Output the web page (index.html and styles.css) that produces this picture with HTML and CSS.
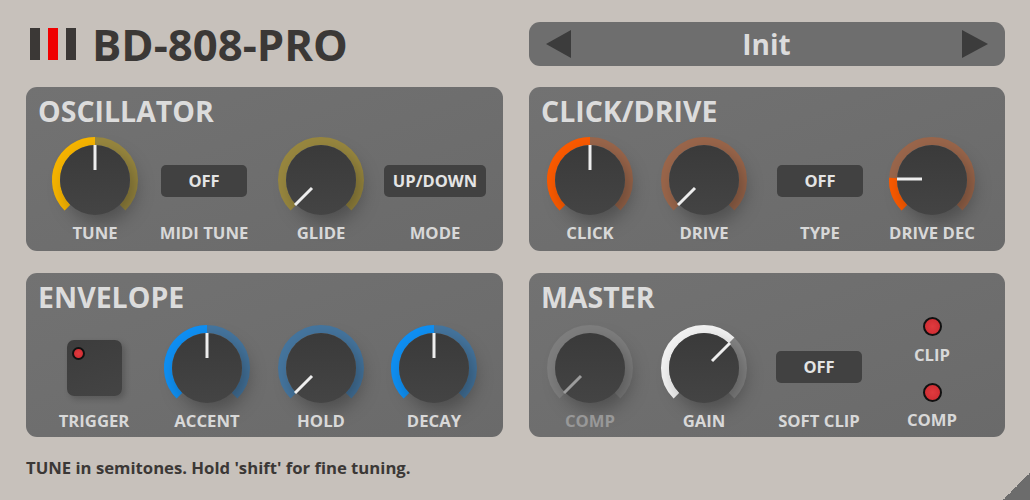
FILE: index.html
```html
<!DOCTYPE html>
<html lang="en">
<head>
    <meta charset="UTF-8">
    <title>BD-808-PRO</title>
    <link rel="stylesheet" href="styles.css">
</head>
<body>
    <div class="page">
        <div class="brand">
            <div class="logo"><span></span><span class="red"></span><span></span></div>
            <h1>BD-808-PRO</h1>
        </div>
        <div class="preset">
            <span class="arrow arrow-left"></span>
            <span class="preset-name">Init</span>
            <span class="arrow arrow-right"></span>
        </div>

        <section class="panel upper osc">
            <h2>OSCILLATOR</h2>
            <div class="row">
                <div class="unit">
                    <div class="control">
                        <svg class="knob yellow" viewBox="-45 -45 90 90">
                            <defs>
                                <linearGradient id="cap" x1="0" y1="0" x2="0" y2="1">
                                    <stop offset="0" stop-color="#3a3a3a"/>
                                    <stop offset="1" stop-color="#444444"/>
                                </linearGradient>
                            </defs>
                            <path class="track" d="M-27.58 27.58A39 39 0 1 1 27.58 27.58"/>
                            <path class="value" d="M-27.58 27.58A39 39 0 0 1 0 -39"/>
                            <circle class="cap" r="35"/>
                            <line class="mark" x1="0" y1="-10" x2="0" y2="-35"/>
                        </svg>
                    </div>
                    <div class="label">TUNE</div>
                </div>
                <div class="unit">
                    <div class="control"><div class="switch">OFF</div></div>
                    <div class="label">MIDI TUNE</div>
                </div>
                <div class="unit">
                    <div class="control">
                        <svg class="knob yellow" viewBox="-45 -45 90 90">
                            <path class="track" d="M-27.58 27.58A39 39 0 1 1 27.58 27.58"/>
                            <circle class="cap" r="35"/>
                            <line class="mark" x1="-9" y1="8" x2="-26" y2="25"/>
                        </svg>
                    </div>
                    <div class="label">GLIDE</div>
                </div>
                <div class="unit">
                    <div class="control"><div class="switch">UP/DOWN</div></div>
                    <div class="label">MODE</div>
                </div>
            </div>
        </section>

        <section class="panel upper click">
            <h2>CLICK/DRIVE</h2>
            <div class="row">
                <div class="unit">
                    <div class="control">
                        <svg class="knob orange" viewBox="-45 -45 90 90">
                            <path class="track" d="M-27.58 27.58A39 39 0 1 1 27.58 27.58"/>
                            <path class="value" d="M-27.58 27.58A39 39 0 0 1 0 -39"/>
                            <circle class="cap" r="35"/>
                            <line class="mark" x1="0" y1="-10" x2="0" y2="-35"/>
                        </svg>
                    </div>
                    <div class="label">CLICK</div>
                </div>
                <div class="unit">
                    <div class="control">
                        <svg class="knob orange" viewBox="-45 -45 90 90">
                            <path class="track" d="M-27.58 27.58A39 39 0 1 1 27.58 27.58"/>
                            <circle class="cap" r="35"/>
                            <line class="mark" x1="-9" y1="8" x2="-26" y2="25"/>
                        </svg>
                    </div>
                    <div class="label">DRIVE</div>
                </div>
                <div class="unit">
                    <div class="control"><div class="switch">OFF</div></div>
                    <div class="label">TYPE</div>
                </div>
                <div class="unit">
                    <div class="control">
                        <svg class="knob orange" viewBox="-45 -45 90 90">
                            <path class="track" d="M-27.58 27.58A39 39 0 1 1 27.58 27.58"/>
                            <path class="value" d="M-27.58 27.58A39 39 0 0 1 -39 -2"/>
                            <circle class="cap" r="35"/>
                            <line class="mark" x1="-35" y1="-1" x2="-10" y2="-1"/>
                        </svg>
                    </div>
                    <div class="label">DRIVE DEC</div>
                </div>
            </div>
        </section>

        <section class="panel lower env">
            <h2>ENVELOPE</h2>
            <div class="row">
                <div class="unit">
                    <div class="control">
                        <div class="trigger"><span class="led led-small"></span></div>
                    </div>
                    <div class="label">TRIGGER</div>
                </div>
                <div class="unit">
                    <div class="control">
                        <svg class="knob blue" viewBox="-45 -45 90 90">
                            <path class="track" d="M-27.58 27.58A39 39 0 1 1 27.58 27.58"/>
                            <path class="value" d="M-27.58 27.58A39 39 0 0 1 0 -39"/>
                            <circle class="cap" r="35"/>
                            <line class="mark" x1="0" y1="-10" x2="0" y2="-35"/>
                        </svg>
                    </div>
                    <div class="label">ACCENT</div>
                </div>
                <div class="unit">
                    <div class="control">
                        <svg class="knob blue" viewBox="-45 -45 90 90">
                            <path class="track" d="M-27.58 27.58A39 39 0 1 1 27.58 27.58"/>
                            <circle class="cap" r="35"/>
                            <line class="mark" x1="-9" y1="8" x2="-26" y2="25"/>
                        </svg>
                    </div>
                    <div class="label">HOLD</div>
                </div>
                <div class="unit">
                    <div class="control">
                        <svg class="knob blue" viewBox="-45 -45 90 90">
                            <path class="track" d="M-27.58 27.58A39 39 0 1 1 27.58 27.58"/>
                            <path class="value" d="M-27.58 27.58A39 39 0 0 1 0 -39"/>
                            <circle class="cap" r="35"/>
                            <line class="mark" x1="0" y1="-10" x2="0" y2="-35"/>
                        </svg>
                    </div>
                    <div class="label">DECAY</div>
                </div>
            </div>
        </section>

        <section class="panel lower master">
            <h2>MASTER</h2>
            <div class="row">
                <div class="unit disabled">
                    <div class="control">
                        <svg class="knob grey" viewBox="-45 -45 90 90">
                            <path class="track" d="M-27.58 27.58A39 39 0 1 1 27.58 27.58"/>
                            <circle class="cap" r="35"/>
                            <line class="mark" x1="-9" y1="8" x2="-26" y2="25"/>
                        </svg>
                    </div>
                    <div class="label">COMP</div>
                </div>
                <div class="unit">
                    <div class="control">
                        <svg class="knob white" viewBox="-45 -45 90 90">
                            <path class="track" d="M-27.58 27.58A39 39 0 1 1 27.58 27.58"/>
                            <path class="value" d="M-27.58 27.58A39 39 0 1 1 27.58 -27.58"/>
                            <circle class="cap" r="35"/>
                            <line class="mark" x1="8" y1="-7" x2="26" y2="-25"/>
                        </svg>
                    </div>
                    <div class="label">GAIN</div>
                </div>
                <div class="unit">
                    <div class="control"><div class="switch">OFF</div></div>
                    <div class="label">SOFT CLIP</div>
                </div>
                <div class="unit meters">
                    <span class="led"></span>
                    <div class="label">CLIP</div>
                    <span class="led"></span>
                    <div class="label">COMP</div>
                </div>
            </div>
        </section>

        <p class="status">TUNE in semitones. Hold 'shift' for fine tuning.</p>
    </div>
    <div class="corner"></div>
</body>
</html>
```

FILE: styles.css
```css
* {
    box-sizing: border-box;
}
html, body {
    margin: 0;
    height: 100%;
    overflow: hidden;
}
body {
    position: relative;
    background-color: #c7c1bb;
    font-family: "Open Sans", "Liberation Sans", sans-serif;
    font-weight: 700;
}
.page {
    display: grid;
    grid-template-columns: 477px 476px;
    grid-template-rows: 44px 165px 164px auto;
    column-gap: 26px;
    row-gap: 21px;
    padding: 22px 0 0 26px;
}
.brand {
    display: flex;
    align-items: center;
    padding-left: 4px;
    gap: 16px;
}
.logo {
    display: flex;
    gap: 8px;
}
.logo span {
    width: 10px;
    height: 32px;
    background-color: #3b3836;
}
.logo .red {
    background-color: #f00000;
}
h1 {
    margin: 0;
    font-size: 43.7px;
    line-height: 44px;
    font-weight: 700;
    color: #3b3836;
}
.preset {
    display: flex;
    align-items: center;
    justify-content: space-between;
    padding: 0 17px;
    border-radius: 11px;
    background-color: #6e6e6e;
}
.preset-name {
    font-size: 28px;
    color: #dcdcdc;
}
.arrow {
    width: 0;
    height: 0;
    border-top: 14px solid transparent;
    border-bottom: 14px solid transparent;
}
.arrow-left {
    border-right: 25px solid #3c3c3c;
}
.arrow-right {
    border-left: 26px solid #3c3c3c;
}
.panel {
    height: 164px;
    padding: 8px 0 0 11px;
    border-radius: 11px;
    background: linear-gradient(160deg, #727272, #6a6a6a);
}
h2 {
    margin: 0 0 0 1px;
    font-size: 28.5px;
    line-height: 32px;
    font-weight: 700;
    color: #dcdcdc;
}
.row {
    display: grid;
    margin-top: 8px;
}
.lower .row {
    margin-top: 10px;
}
.osc .row {
    padding-left: 1px;
    grid-template-columns: 114px 104px 130px 98px;
}
.click .row {
    grid-template-columns: 100px 128px 104px 120px;
}
.env .row {
    grid-template-columns: 114px 112px 116px 110px;
}
.master .row {
    grid-template-columns: 100px 128px 102px 124px;
}
.unit {
    display: flex;
    flex-direction: column;
    align-items: center;
}
.control {
    display: flex;
    align-items: center;
    justify-content: center;
    height: 90px;
}
.label {
    font-size: 16.7px;
    line-height: 16px;
    color: #d8d8d8;
    white-space: nowrap;
}
.disabled .label {
    color: #989898;
}
.knob {
    width: 90px;
    height: 90px;
    overflow: visible;
}
.track, .value {
    fill: none;
    stroke-width: 8;
}
.cap {
    fill: url(#cap);
    filter: drop-shadow(6px 8px 9px rgba(0, 0, 0, 0.28));
}
.mark {
    stroke: #eeeeee;
    stroke-width: 3;
}
.yellow .track { stroke: #98873f; }
.yellow .value { stroke: #f6b400; }
.orange .track { stroke: #9a664b; }
.orange .value { stroke: #fa5a00; }
.blue .track { stroke: #45759e; }
.blue .value { stroke: #0f8ff2; }
.white .track { stroke: #858585; }
.white .value { stroke: #f2f2f2; }
.grey .track { stroke: #7e7e7e; }
.grey .mark { stroke: #9c9c9c; }
.switch {
    min-width: 86px;
    padding: 0 9px;
    line-height: 32px;
    text-align: center;
    font-size: 16.5px;
    color: #e4e4e4;
    border-radius: 5px;
    background-color: #414141;
}
.upper .switch {
    margin-top: 2px;
}
.lower .switch {
    margin-bottom: 3px;
}
.trigger {
    width: 55px;
    height: 56px;
    padding: 7px 0 0 5px;
    border-radius: 7px;
    background: linear-gradient(160deg, #3c3c3c, #444444);
    box-shadow: 3px 3px 6px rgba(0, 0, 0, 0.2);
}
.led {
    display: block;
    width: 19px;
    height: 19px;
    border: 2px solid #111111;
    border-radius: 50%;
    background: radial-gradient(circle, #e03a3e, #cc2a30);
}
.led-small {
    width: 13px;
    height: 13px;
}
.meters {
    margin-top: -6px;
}
.meters .label {
    margin: 11px 0 20px;
}
.meters .label:last-child {
    margin: 10px 0 0;
}
.status {
    grid-column: 1 / 3;
    margin: 1px 0 0;
    font-size: 16.7px;
    line-height: 18px;
    color: #3b3836;
}
.corner {
    position: absolute;
    right: 0;
    bottom: 0;
    width: 27px;
    height: 27px;
    background: linear-gradient(135deg, transparent 50%, #6c6c6c 50%);
}
```
